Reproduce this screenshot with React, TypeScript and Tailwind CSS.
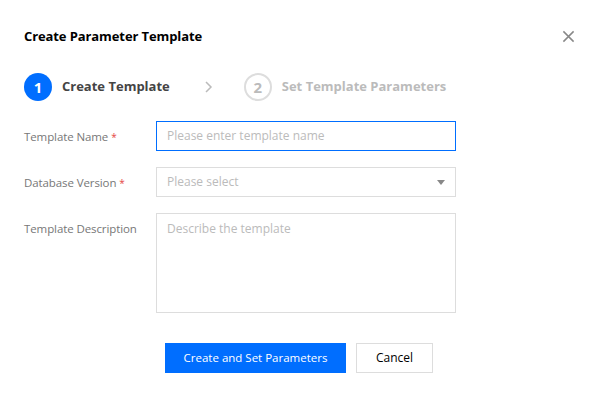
import React from "react";

const font = { fontFamily: '"Open Sans", "Noto Sans", Arial, sans-serif' };

function FormRow({ label, required, children }: { label: string; required?: boolean; children: React.ReactNode }) {
    return (
        <div className="flex items-start">
            <div className="w-[132px] shrink-0 pt-[8px] text-[11.5px] leading-[16px] text-[#777] tracking-[-0.1px]">
                {label}
                {required && <span className="ml-[3px] text-[10px] text-[#e54545]">*</span>}
            </div>
            {children}
        </div>
    );
}

export default function App() {
    return (
        <div className="w-[598px] h-[397px] bg-white relative" style={font}>
            {/* Header */}
            <div className="flex items-center justify-between pl-[24px] pr-[23px] pt-[27px]">
                <h2 className="text-[13px] font-bold leading-[18px] text-black tracking-[-0.1px]">Create Parameter Template</h2>
                <svg width="13" height="13" viewBox="0 0 14 14" className="text-[#888]">
                    <path d="M1.5 1.5 L12.5 12.5 M12.5 1.5 L1.5 12.5" stroke="currentColor" strokeWidth="1.6" />
                </svg>
            </div>

            {/* Steps */}
            <div className="flex items-center pl-[24px] mt-[28px] h-[28px]">
                <div className="w-[28px] h-[28px] rounded-full bg-[#006eff] text-white flex items-center justify-center text-[15px] font-bold">1</div>
                <span className="ml-[10px] text-[13px] font-bold text-[#444]">Create Template</span>
                <svg width="10" height="14" viewBox="0 0 10 14" className="ml-[34px] text-[#bbb]">
                    <path d="M2 2 L7 7 L2 12" fill="none" stroke="currentColor" strokeWidth="1.5" />
                </svg>
                <div className="ml-[30px] w-[28px] h-[28px] rounded-full border-2 border-[#ddd] text-[#bbb] flex items-center justify-center text-[15px] font-bold">2</div>
                <span className="ml-[10px] text-[13px] font-bold text-[#bbb]">Set Template Parameters</span>
            </div>

            {/* Form */}
            <div className="flex flex-col gap-[16px] pl-[24px] mt-[20px]">
                <FormRow label="Template Name" required>
                    <div className="w-[300px] h-[30px] border border-[#006eff] flex items-center px-[10px] text-[12px] text-[#bbb]">
                        Please enter template name
                    </div>
                </FormRow>
                <FormRow label="Database Version" required>
                    <div className="w-[300px] h-[30px] border border-[#ddd] flex items-center justify-between pl-[10px] pr-[10px] text-[12px] text-[#bbb]">
                        <span>Please select</span>
                        <svg width="8" height="5" viewBox="0 0 8 5">
                            <path d="M0 0 H8 L4 5 Z" fill="#888" />
                        </svg>
                    </div>
                </FormRow>
                <FormRow label="Template Description">
                    <div className="w-[300px] h-[100px] border border-[#ddd] px-[10px] pt-[7px] text-[12px] leading-[16px] text-[#bbb]">
                        Describe the template
                    </div>
                </FormRow>
            </div>

            {/* Footer */}
            <div className="flex justify-center gap-[10px] mt-[30px]">
                <button className="w-[181px] h-[30px] bg-[#006eff] text-white text-[11.5px]">Create and Set Parameters</button>
                <button className="w-[77px] h-[30px] border border-[#ddd] bg-white text-[#000] text-[12px]">Cancel</button>
            </div>
        </div>
    );
}
